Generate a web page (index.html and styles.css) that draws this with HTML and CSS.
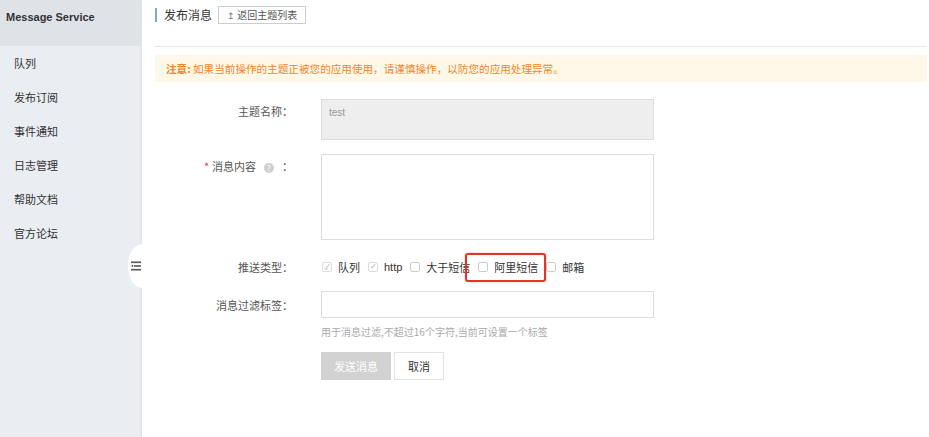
FILE: index.html
```html
<!DOCTYPE html>
<html>
<head>
<meta charset="utf-8">
<link rel="stylesheet" href="styles.css">
</head>
<body>
<div class="app">
  <aside class="sidebar">
    <div class="brand">Message Service</div>
    <ul class="menu">
      <li>队列</li>
      <li>发布订阅</li>
      <li>事件通知</li>
      <li>日志管理</li>
      <li>帮助文档</li>
      <li>官方论坛</li>
    </ul>
    <div class="toggle">
      <svg width="10" height="10" viewBox="0 0 10 10">
        <rect x="0" y="0.5" width="10" height="1.6" fill="#555"/>
        <rect x="3" y="4.2" width="7" height="1.6" fill="#555"/>
        <path d="M0 5 L2.2 3.6 L2.2 6.4 Z" fill="#555"/>
        <rect x="0" y="7.9" width="10" height="1.6" fill="#555"/>
      </svg>
    </div>
  </aside>
  <main class="main">
    <div class="head">
      <span class="title">发布消息</span>
      <span class="back"><span class="arrow">↥</span> 返回主题列表</span>
    </div>
    <div class="notice"><b>注意:</b> 如果当前操作的主题正被您的应用使用，请谨慎操作，以防您的应用处理异常。</div>
    <div class="form">
      <div class="row">
        <div class="label">主题名称：</div>
        <div class="field"><div class="input disabled">test</div></div>
      </div>
      <div class="row">
        <div class="label"><span class="req">*</span>消息内容 <span class="help">?</span> ：</div>
        <div class="field"><div class="input textarea"></div></div>
      </div>
      <div class="row row-check">
        <div class="label">推送类型：</div>
        <div class="field checks">
          <span class="chk"><span class="box checked">✓</span>队列</span>
          <span class="chk"><span class="box checked">✓</span>http</span>
          <span class="chk"><span class="box"></span>大于短信</span>
          <span class="chk hl"><span class="box"></span>阿里短信</span>
          <span class="chk"><span class="box"></span>邮箱</span>
        </div>
      </div>
      <div class="row row-tag">
        <div class="label">消息过滤标签：</div>
        <div class="field">
          <div class="input small"></div>
          <div class="hint">用于消息过滤,不超过16个字符,当前可设置一个标签</div>
          <div class="buttons">
            <span class="btn primary">发送消息</span>
            <span class="btn">取消</span>
          </div>
        </div>
      </div>
    </div>
  </main>
</div>
</body>
</html>
```
FILE: styles.css
```css
* { box-sizing: border-box; }
html, body { margin: 0; padding: 0; }
body {
  font-family: "Noto Sans CJK SC", "Liberation Sans", sans-serif;
  font-size: 11px;
  color: #333;
  background: #fff;
  width: 929px;
  height: 437px;
  overflow: hidden;
}
.app { display: flex; height: 437px; }
.sidebar {
  width: 142px;
  flex: none;
  background: #eaedf1;
  position: relative;
  box-shadow: inset -2px 0 2px -1px #dde0e6;
}
.brand {
  height: 46px;
  background: #dfe2e7;
  font-family: "Liberation Sans", Arial, sans-serif;
  font-weight: bold;
  font-size: 11px;
  color: #333;
  padding: 11px 0 0 6px;
}
.menu { list-style: none; margin: 0; padding: 8px 0 0 14px; }
.menu li { height: 34px; line-height: 18px; color: #333; }
.toggle {
  position: absolute;
  left: 128px;
  top: 244px;
  width: 28px;
  height: 44px;
  border-radius: 50%;
  background: #fff;
  display: flex;
  align-items: center;
  padding-left: 3px;
}
.main { flex: 1; padding: 0 2px 0 13px; }
.head {
  height: 47px;
  border-bottom: 1px solid #e8e8e8;
  display: flex;
  align-items: flex-start;
  padding-top: 6px;
}
.title {
  border-left: 2px solid #7fa8d6;
  padding-left: 7px;
  font-size: 12px;
  line-height: 14px;
  margin-top: 2px;
  color: #333;
}
.back {
  margin-left: 6px;
  border: 1px solid #ccc;
  height: 18px;
  padding: 0 8px;
  line-height: 16px;
  font-size: 10px;
  color: #555;
}
.arrow { font-size: 9px; color: #777; }
.notice {
  margin-top: 8px;
  height: 27px;
  background: #fef8e8;
  color: #f0862a;
  font-size: 10.6px;
  line-height: 27px;
  padding-left: 11px;
}
.notice b { font-weight: bold; }
.form { padding-top: 17px; }
.row { display: flex; margin-bottom: 14px; }
.label {
  width: 166px;
  flex: none;
  text-align: right;
  padding-right: 28px;
  padding-top: 5px;
  color: #555;
  font-size: 11px;
  line-height: 14px;
}
.field { width: 333px; }
.input {
  border: 1px solid #ddd;
  background: #fff;
  width: 333px;
}
.disabled {
  height: 41px;
  background: #eeeeee;
  color: #999;
  font-family: "Liberation Sans", Arial, sans-serif;
  font-size: 10px;
  padding: 7px 7px;
}
.textarea { height: 86px; }
.req { color: #e4393c; margin-right: 3px; }
.help {
  display: inline-block;
  width: 10px; height: 10px;
  border-radius: 50%;
  background: #cfcfcf;
  color: #fff;
  font-size: 8px;
  line-height: 10px;
  text-align: center;
  margin: 0 6px 0 5px;
  vertical-align: 0px;
}
.row-check { margin-bottom: 11px; }
.row-check .label { padding-top: 6px; }
.checks { display: flex; align-items: center; height: 26px; }
.chk { display: inline-flex; align-items: center; color: #333; font-size: 11px; margin-right: 8px; }
.chk:first-child { margin-left: 1px; }
.box {
  width: 10px; height: 10px;
  border: 1px solid #ccc;
  border-radius: 2px;
  margin-right: 6px;
  font-size: 8px;
  line-height: 8px;
  text-align: center;
  color: #aaa;
}
.box.checked { border-color: #ddd; }
.chk:nth-child(2) { font-family: "Liberation Sans", Arial, sans-serif; }
.hl {
  position: relative;
}
.hl::after {
  content: "";
  position: absolute;
  left: -13px; top: -6px; right: -8px; bottom: -7px;
  border: 2px solid #e0342c;
  border-radius: 3px;
  box-shadow: 0 0 2px rgba(224,52,44,0.4);
}
.row-tag .label { padding-top: 7px; }
.small { height: 27px; }
.hint { color: #aaa; font-size: 10px; margin-top: 7px; line-height: 14px; }
.buttons { display: flex; gap: 3px; margin-top: 13px; }
.btn {
  height: 28px;
  line-height: 26px;
  border: 1px solid #e2e2e2;
  padding: 0 13px;
  font-size: 11px;
  color: #333;
  background: #fff;
}
.btn.primary {
  width: 70px;
  background: #d2d2d2;
  border-color: #d2d2d2;
  color: #fff;
  text-align: center;
  padding: 0;
}
```
